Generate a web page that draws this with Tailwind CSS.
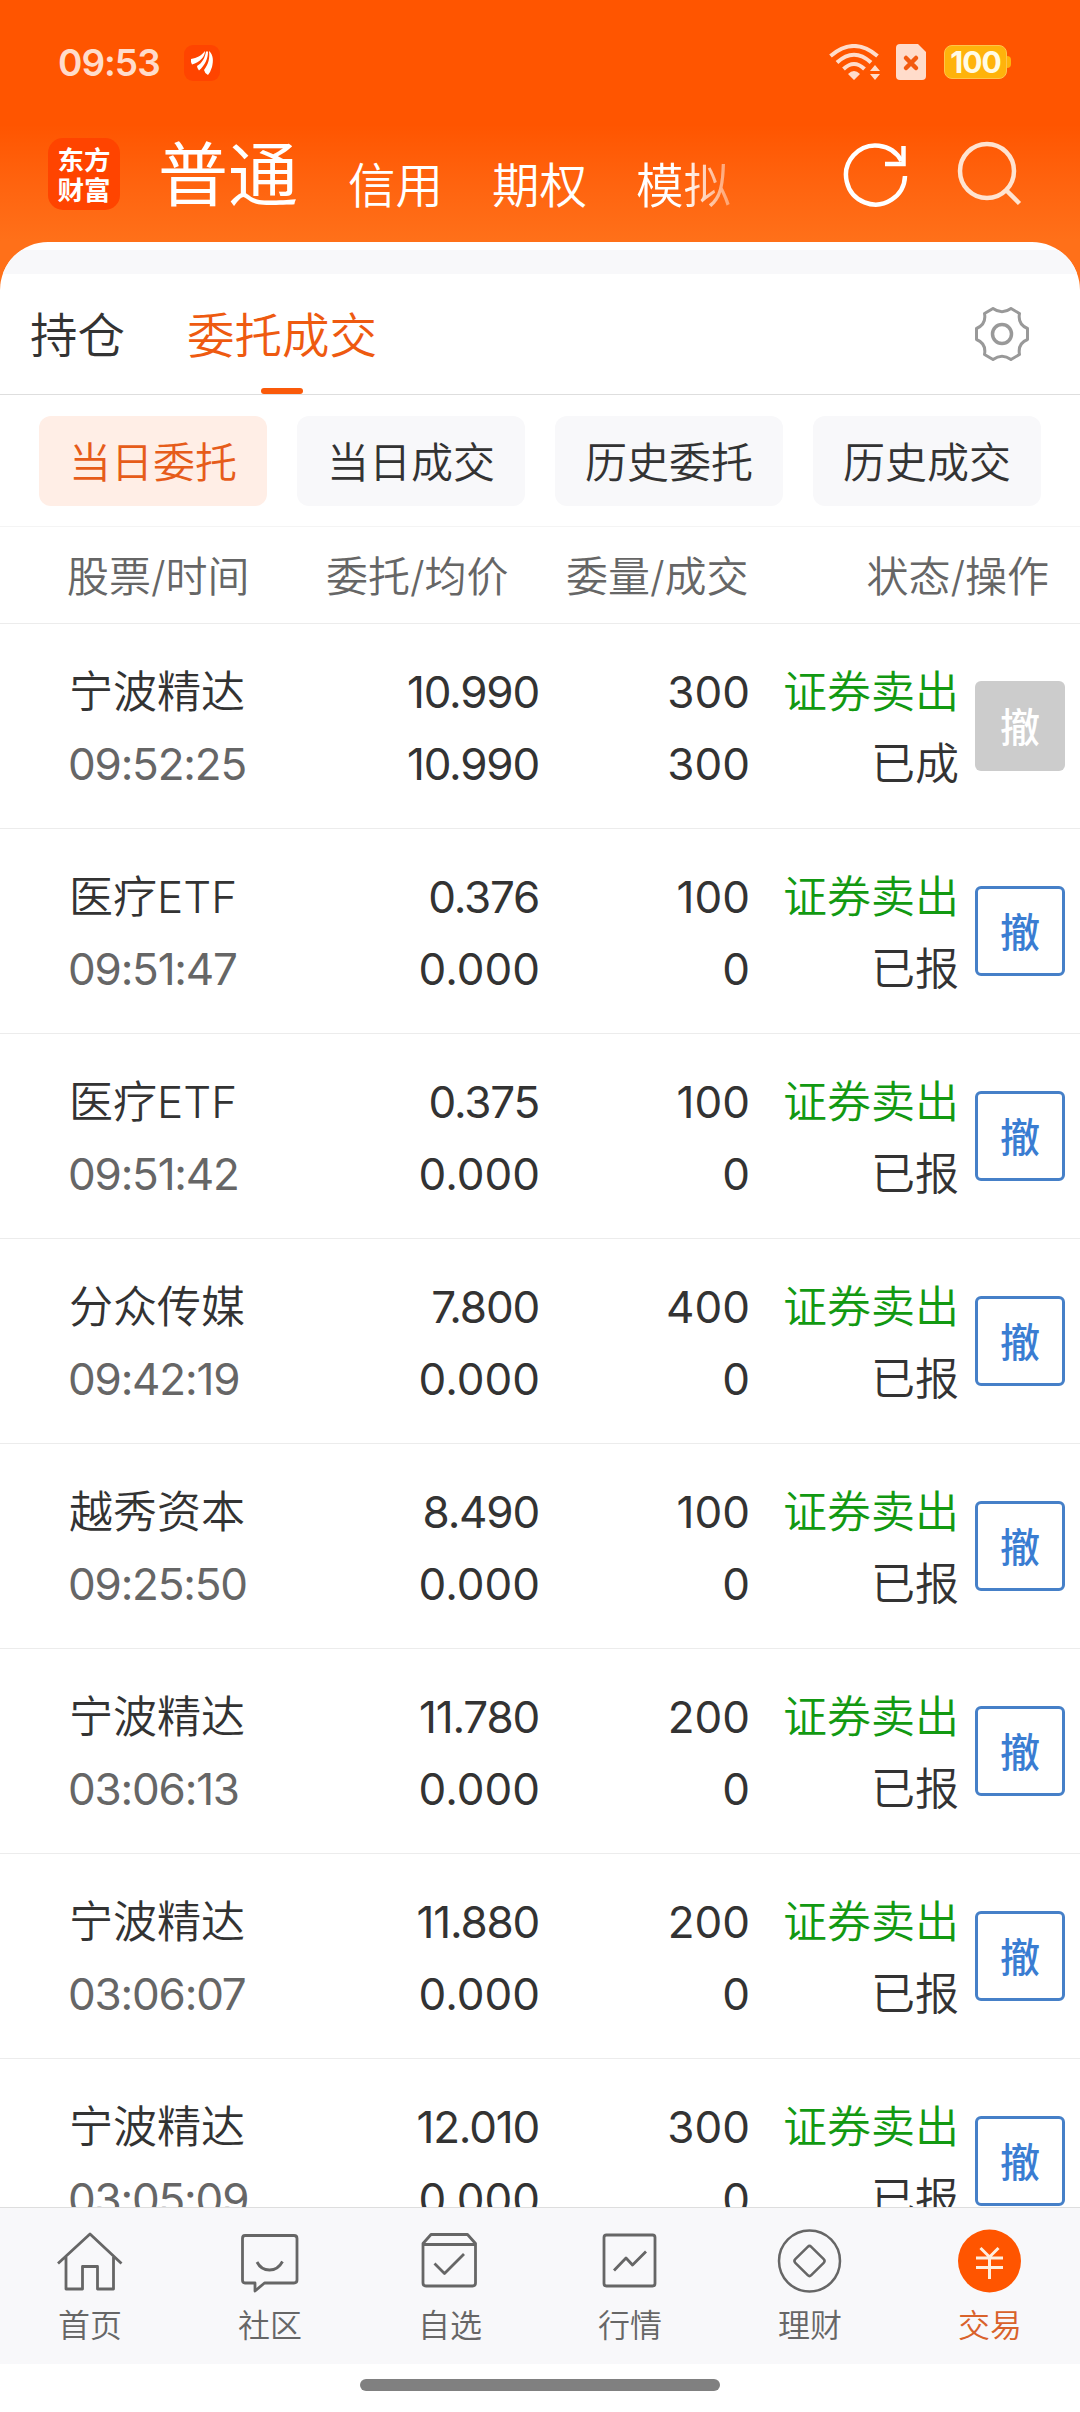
<!DOCTYPE html>
<html lang="zh-Hans">
<head>
    <meta charset="UTF-8">
    <meta name="viewport" content="width=device-width, initial-scale=1.0">
    <title>委托成交</title>
    <script src="https://cdn.jsdelivr.net/npm/@tailwindcss/browser@4"></script>
</head>
<body class="w-[1080px] h-[2412px] m-0 overflow-hidden flex flex-col bg-white font-['Inter','Noto_Sans_CJK_SC',sans-serif] font-[350] text-[#333]">
    <!-- 顶部橙色区域 -->
    <header class="h-[290px] shrink-0 bg-linear-to-b from-[#ff5500] from-43% to-[#ff7019] to-83%">
        <div class="h-[126px] pt-[44px] pl-[58px] pr-[69px] flex items-start justify-between">
            <div class="flex items-center">
                <span class="w-[126px] text-[37px] leading-[37px] font-semibold tracking-[-1px] text-[#ffdccb]">09:53</span>
                <svg class="w-9 h-9" viewBox="0 0 36 36">
                    <rect width="36" height="36" rx="9" fill="#ff4400"/>
                    <path fill="#fff" d="M7 14C13 13 17 11 21 6C21 12 16 17 8 19.500Q6.500 17 7 14z"/>
                    <path fill="#fff" d="M22 6.500H24C24 14 21 20 15 25.500Q13 23 13 21C18 18 21 13 22 6.500z"/>
                    <path fill="#fff" d="M25 6C29.500 10 29.500 16 28 22Q26.500 27 24 30Q20.500 28 20 25C24.500 19 26 13 25 6z"/>
                </svg>
            </div>
            <div class="flex items-center">
                <svg class="w-[52px] h-9 mr-[15px]" viewBox="0 0 52 36" fill="none" stroke="#ffdccb" stroke-width="4">
                    <path d="M1.500 12Q25 -8 48.500 12"/>
                    <path d="M8 18.500Q25 3 42 18.500"/>
                    <path d="M14.500 25Q25 15 35.500 25"/>
                    <path fill="#ffdccb" stroke="none" d="M19 30Q25 24 31 30L25 36zM41 27L46 21 51 27zM41 30L46 36 51 30z"/>
                </svg>
                <svg class="w-[30px] h-9 mr-[18px]" viewBox="0 0 30 36">
                    <path fill="#ffdccb" d="M4 0H22L30 8V32Q30 36 26 36H4Q0 36 0 32V4Q0 0 4 0z"/>
                    <path d="M10 14L20 24M20 14L10 24" stroke="#f25a10" stroke-width="4.500" stroke-linecap="round"/>
                </svg>
                <div class="w-[63px] h-[34px] rounded-[8px] bg-[#ffb30b] border border-[#ffc44a] flex items-center justify-center text-[30px] leading-none font-bold tracking-[-1px] text-[#fffbe6]">100</div>
                <div class="w-1 h-3 rounded-r-sm bg-[#ffb30b]"></div>
            </div>
        </div>
        <div class="h-[116px] pl-12 pr-[56px] flex items-start">
            <div class="mt-3 w-[72px] h-[72px] rounded-[15px] bg-[#ff4400] flex items-center justify-center text-white text-[26.500px] leading-[30px] font-bold text-center font-['Noto_Sans_CJK_SC',sans-serif]">东方<br>财富</div>
            <nav class="ml-[38px] flex w-[620px] text-white whitespace-nowrap">
                <span class="text-[70px] leading-[100px] font-normal">普通</span>
                <span class="ml-[50px] mt-[24px] text-[47.500px] leading-[72px]">信用</span>
                <span class="ml-[49px] mt-[24px] text-[47.500px] leading-[72px]">期权</span>
                <span class="ml-[49px] mt-[24px] text-[47.500px] leading-[72px] mask-r-from-50% mask-r-to-130%">模拟</span>
            </nav>
            <svg class="ml-auto mt-3 w-[184px] h-[72px] shrink-0" viewBox="840 138 184 72" fill="none" stroke="#fff" stroke-width="4.500">
                <path d="M905 176A29.500 29.500 0 1 1 901.500 161"/>
                <path d="M903.500 146V164H885"/>
                <g stroke="#ffe3d0">
                    <circle cx="987" cy="171" r="27"/>
                    <path d="M1006 190L1019.500 203.500"/>
                </g>
            </svg>
        </div>
    </header>

    <!-- 白色面板 -->
    <main class="-mt-12 h-[1965px] shrink-0 rounded-t-[48px] bg-white overflow-hidden">
        <div class="mt-2 h-6 bg-[#f8f8fa]"></div>
        <div class="h-[121px] border-b border-[#dedede] pl-[30px] pr-[51px] flex justify-between text-[47.500px] leading-[123px]">
            <div class="flex gap-[62px]">
                <span>持仓</span>
                <span class="relative h-[120px] text-[#ee5a10]">委托成交
                    <i class="absolute left-[74px] bottom-0 w-[42px] h-[6px] rounded-full bg-[#fa5a0a]"></i>
                </span>
            </div>
            <svg class="mt-[33px] w-[54px] h-[54px]" viewBox="0 0 54 54" fill="none" stroke="#999" stroke-width="3" stroke-linejoin="round">
                <path d="M18 1.500Q27 8 36 1.500L44.500 6.500Q42.500 17.500 52.500 21.500V32.500Q42.500 36.500 44.500 47.500L36 52.500Q27 46 18 52.500L9.500 47.500Q11.500 36.500 1.500 32.500V21.500Q11.500 17.500 9.500 6.500z"/>
                <circle cx="27" cy="27" r="9.500" stroke-width="3.500"/>
            </svg>
        </div>
        <div class="h-[132px] border-b border-[#f4f4f4] px-[39px] pt-[21px] grid grid-cols-4 gap-[30px] text-[42px] leading-[93px] text-center">
            <span class="h-[90px] rounded-[12px] bg-[#ffeee6] text-[#e65c1a]">当日委托</span>
            <span class="h-[90px] rounded-[12px] bg-[#f8f8fa]">当日成交</span>
            <span class="h-[90px] rounded-[12px] bg-[#f8f8fa]">历史委托</span>
            <span class="h-[90px] rounded-[12px] bg-[#f8f8fa]">历史成交</span>
        </div>
        <div class="h-[97px] border-b border-[#ececec] pl-[67px] pr-[31px] grid grid-cols-[259px_240px_1fr_auto] text-[42px] leading-[99px] text-[#666]">
            <span>股票/时间</span>
            <span>委托/均价</span>
            <span>委量/成交</span>
            <span>状态/操作</span>
        </div>
        <div id="orders"></div>
    </main>

    <!-- 底部导航 -->
    <footer class="h-[157px] shrink-0 border-t border-[#dedede] bg-[#f8f8fa] grid grid-cols-6 text-[32px] leading-[48px] text-[#666]">
        <div class="pt-[17px] flex flex-col items-center">
            <svg class="w-[72px] h-[72px] mb-[5px]" viewBox="0 0 72 72" fill="none" stroke="#666" stroke-width="2.800" stroke-linejoin="round">
                <path d="M4 38.500L36 9L67.500 38.500M12 32V64H28.500V41.500H43.500V64H59.500V32"/>
            </svg>
            <span>首页</span>
        </div>
        <div class="pt-[17px] flex flex-col items-center">
            <svg class="w-[72px] h-[72px] mb-[5px]" viewBox="0 0 72 72" fill="none" stroke="#666" stroke-width="2.800" stroke-linejoin="round">
                <path d="M11 10.500H60Q63 10.500 63 13.500V55Q63 58 60 58H30.500L21 66V58H11Q8.500 58 8.500 55V13.500Q8.500 10.500 11 10.500zM23 37Q27 45 35.500 45T48.500 36.500"/>
            </svg>
            <span>社区</span>
        </div>
        <div class="pt-[17px] flex flex-col items-center">
            <svg class="w-[72px] h-[72px] mb-[5px]" viewBox="0 0 72 72" fill="none" stroke="#666" stroke-width="2.800" stroke-linejoin="round">
                <path d="M9 18.500L17 9.500H53.500L61.500 18.500V58Q61.500 61 58.500 61H12Q9 61 9 58zM9 19.500H61.500M20.500 38.500L30.500 48.500L50 29"/>
            </svg>
            <span>自选</span>
        </div>
        <div class="pt-[17px] flex flex-col items-center">
            <svg class="w-[72px] h-[72px] mb-[5px]" viewBox="0 0 72 72" fill="none" stroke="#666" stroke-width="2.800" stroke-linejoin="round">
                <rect x="10" y="10" width="51" height="51" rx="2.500"/>
                <path d="M20 45.500L32 33L38.500 40L52 26.500"/>
            </svg>
            <span>行情</span>
        </div>
        <div class="pt-[17px] flex flex-col items-center">
            <svg class="w-[72px] h-[72px] mb-[5px]" viewBox="0 0 72 72" fill="none" stroke="#666" stroke-width="2.500">
                <circle cx="35.500" cy="36" r="30.500"/>
                <rect x="24.200" y="24.700" width="22.600" height="22.600" rx="2.500" transform="rotate(45 35.500 36)"/>
            </svg>
            <span>理财</span>
        </div>
        <div class="pt-[17px] flex flex-col items-center text-[#d9622b]">
            <svg class="w-[72px] h-[72px] mb-[5px]" viewBox="0 0 72 72" fill="none" stroke="#ffeede" stroke-width="3">
                <circle cx="35.500" cy="36" r="31.500" fill="#ff5500" stroke="none"/>
                <path d="M26.500 23L35.500 32L44.500 23M22 33H49M22 42.500H49M35.500 32V54"/>
            </svg>
            <span>交易</span>
        </div>
    </footer>
    <div class="flex-1 pt-[15px]">
        <div class="mx-auto w-[360px] h-3 rounded-full bg-[#808080]"></div>
    </div>

    <script>
        // 名称, 时间, 委托价, 均价, 委量, 成交量, 状态
        const orders = [
            ['宁波精达', '09:52:25', '10.990', '10.990', '300', '300', '已成'],
            ['医疗ETF', '09:51:47', '0.376', '0.000', '100', '0', '已报'],
            ['医疗ETF', '09:51:42', '0.375', '0.000', '100', '0', '已报'],
            ['分众传媒', '09:42:19', '7.800', '0.000', '400', '0', '已报'],
            ['越秀资本', '09:25:50', '8.490', '0.000', '100', '0', '已报'],
            ['宁波精达', '03:06:13', '11.780', '0.000', '200', '0', '已报'],
            ['宁波精达', '03:06:07', '11.880', '0.000', '200', '0', '已报'],
            ['宁波精达', '03:05:09', '12.010', '0.000', '300', '0', '已报']
        ];

        // 非零价格字距略紧
        const price = v => `<p class="${v === '0.000' ? '' : 'tracking-[-1.200px] pr-px'}">${v}</p>`;

        document.getElementById('orders').innerHTML = orders.map(o => {
            // 已成交的委托不能再撤单
            const btn = o[6] === '已成'
                ? 'bg-[#ccc] text-white'
                : 'border-[3px] border-[#4680c8] text-[#3a7dd2]';
            return `
            <div class="h-[205px] border-b border-[#ececec] pt-[32px] pl-[70px] pr-[15px] flex text-[44px] leading-[72px]">
                <div class="w-[270px]"><p class="-ml-px">${o[0]}</p><p class="-ml-0.5 tracking-[-1.200px] font-normal text-[#666]">${o[1]}</p></div>
                <div class="w-[200px] text-right font-normal">${price(o[2])}${price(o[3])}</div>
                <div class="w-[210px] text-right font-normal"><p>${o[4]}</p><p>${o[5]}</p></div>
                <div class="w-[209px] text-right"><p class="text-[#129912]">证券卖出</p><p>${o[6]}</p></div>
                <div class="ml-auto mt-[25px] w-[90px] h-[90px] rounded-[6px] pt-[3px] flex items-center justify-center text-[40px] font-medium ${btn}">撤</div>
            </div>`;
        }).join('');
    </script>
</body>
</html>
